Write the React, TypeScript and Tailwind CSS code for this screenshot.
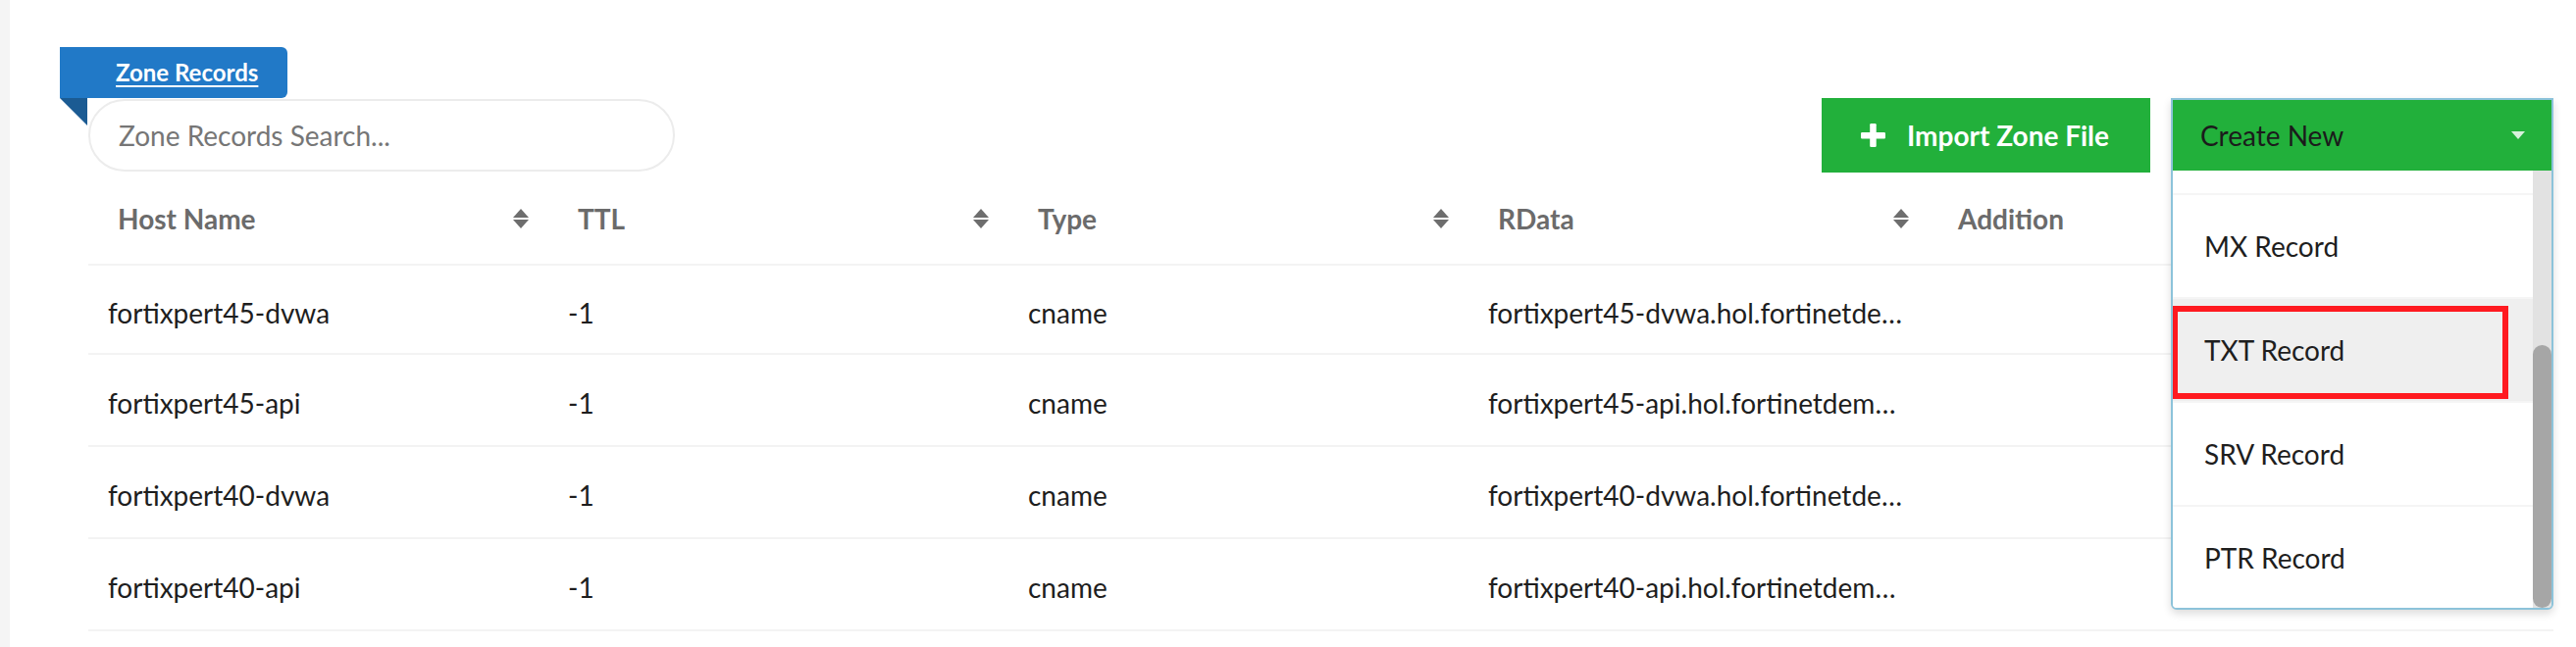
import React from "react";

const rows: [string, string, string, string][] = [
  ["fortixpert45-dvwa", "-1", "cname", "fortixpert45-dvwa.hol.fortinetdemo.com"],
  ["fortixpert45-api", "-1", "cname", "fortixpert45-api.hol.fortinetdemo.com"],
  ["fortixpert40-dvwa", "-1", "cname", "fortixpert40-dvwa.hol.fortinetdemo.com"],
  ["fortixpert40-api", "-1", "cname", "fortixpert40-api.hol.fortinetdemo.com"],
];

const headers = ["Host Name", "TTL", "Type", "RData", "Addition"];

function SortIcon() {
  return (
    <svg width="16" height="20" viewBox="0 0 16 20" className="shrink-0">
      <path d="M8 0 L16 9 L0 9 Z" fill="#6d6d6d" />
      <path d="M0 11 L16 11 L8 20 Z" fill="#6d6d6d" />
    </svg>
  );
}

function PlusIcon() {
  return (
    <svg width="25" height="24" viewBox="0 0 25 24" className="shrink-0">
      <rect x="0" y="9" width="25" height="6.5" rx="1.2" fill="#ffffff" />
      <rect x="9.2" y="0" width="6.5" height="24" rx="1.2" fill="#ffffff" />
    </svg>
  );
}

function Caret() {
  return (
    <svg width="14" height="8" viewBox="0 0 14 8" className="shrink-0">
      <path d="M0 0 L14 0 L7 8 Z" fill="rgba(255,255,255,0.82)" />
    </svg>
  );
}

const menuItems = ["CNAME Record", "MX Record", "TXT Record", "SRV Record", "PTR Record"];

export default function App() {
  return (
    <div className="flex h-[660px] w-full overflow-hidden bg-white font-['Lato',sans-serif]">
      <div className="w-[10px] shrink-0 bg-[#f5f5f5]" />
      <div className="ml-[80px] mr-[23px] flex flex-1 flex-col">
        {/* top bar */}
        <div className="relative z-10 mt-[100px] flex h-[76px] items-start justify-between">
          <div className="relative mt-[1px]">
            <div className="absolute left-[-29px] top-[-53px] z-10">
              <div className="flex h-[52px] w-[232px] items-center rounded-r-[6px] bg-[#2179c7] pl-[57px]">
                <span className="text-[24px] font-bold leading-none text-white underline decoration-[2px] underline-offset-[4px]">
                  Zone Records
                </span>
              </div>
              <div className="h-0 w-0 border-l-[28px] border-t-[28px] border-l-transparent border-t-[#1b5b93]" />
            </div>
            <input
              className="h-[74px] w-[598px] rounded-full border-2 border-[#ececec] bg-white pl-[29px] text-[28px] text-[#222] outline-none placeholder:text-[#767676]"
              placeholder="Zone Records Search..."
            />
          </div>
          <div className="flex items-start gap-[21px]">
            <button className="flex h-[76px] w-[335px] items-center gap-[22px] bg-[#22b03b] pl-[40px]">
              <PlusIcon />
              <span className="text-[28px] font-bold text-white">Import Zone File</span>
            </button>
            <div className="relative h-[76px] w-[390px]">
              <div className="absolute left-0 top-0 w-[390px] overflow-hidden rounded-b-[6px] border-2 border-[#8cc3da] bg-white shadow-[0_4px_8px_rgba(0,0,0,0.14)]">
                <div className="flex h-[72px] items-center justify-between bg-[#22b03b] pl-[28px] pr-[27px]">
                  <span className="text-[28px] text-[#1b1b1b]">Create New</span>
                  <Caret />
                </div>
                <div className="flex h-[446px]">
                  <div className="flex-1 overflow-hidden">
                    <div className="mt-[-81px]">
                      {menuItems.map((m) => (
                        <div
                          key={m}
                          className={`flex h-[106px] items-center border-b-2 border-[#f5f5f5] pl-[32px] text-[28px] text-[#1e1e1e] ${
                            m === "TXT Record" ? "bg-[#efefef]" : "bg-white"
                          }`}
                        >
                          {m}
                        </div>
                      ))}
                    </div>
                  </div>
                  <div className="flex w-[19px] flex-col bg-[#e2e2e2] pt-[178px]">
                    <div className="flex-1 rounded-full bg-[#a6a6a6]" />
                  </div>
                </div>
                <div className="absolute left-[-1px] top-[210px] h-[95px] w-[343px] border-[6px] border-[#ff1a20]" />
              </div>
            </div>
          </div>
        </div>

        {/* table */}
        <div className="flex h-[95px] border-b-2 border-[#f3f3f3]">
          {headers.map((h, i) => (
            <div
              key={h}
              className={`flex items-center justify-between pl-[30px] pr-[20px] ${i < 4 ? "w-[469px] shrink-0" : "flex-1"}`}
            >
              <span className="text-[28px] font-bold text-[#6b6b6b]">{h}</span>
              <SortIcon />
            </div>
          ))}
        </div>
        {rows.map((r, ri) => (
          <div
            key={r[0]}
            className={`flex items-center border-b-2 border-[#f3f3f3] pt-[6px] ${ri === 0 ? "h-[91px]" : "h-[94px]"}`}
          >
            {r.map((c, ci) => (
              <div
                key={ci}
                className="w-[469px] shrink-0 overflow-hidden text-ellipsis whitespace-nowrap pl-[20px] pr-[22px] text-[28px] text-[#1e1e1e]"
              >
                {c}
              </div>
            ))}
            <div className="flex-1" />
          </div>
        ))}
      </div>
    </div>
  );
}
